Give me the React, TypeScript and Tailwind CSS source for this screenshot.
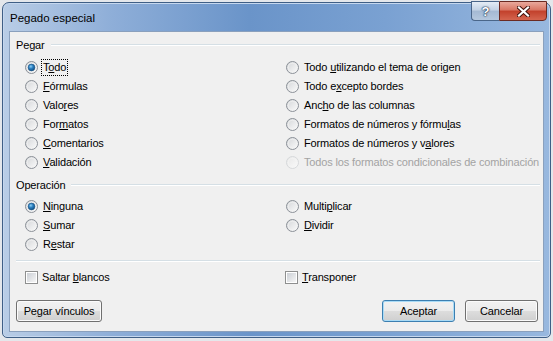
import React from "react";

function Radio({ checked = false, disabled = false, id }: { checked?: boolean; disabled?: boolean; id: string }) {
    return (
        <svg width="13" height="13" viewBox="0 0 13 13" className="shrink-0">
            <defs>
                <linearGradient id={`rb-${id}`} x1="0" y1="0" x2="1" y2="1">
                    <stop offset="0" stopColor={disabled ? "#e6e6e6" : "#d2d4d7"} />
                    <stop offset="1" stopColor={disabled ? "#fbfbfb" : "#fdfdfd"} />
                </linearGradient>
                <radialGradient id={`rd-${id}`} cx="0.4" cy="0.35" r="0.7">
                    <stop offset="0" stopColor="#8fd0f5" />
                    <stop offset="0.45" stopColor="#2b7fc0" />
                    <stop offset="1" stopColor="#0d4a7e" />
                </radialGradient>
            </defs>
            <circle cx="6.5" cy="6.5" r="6" fill={`url(#rb-${id})`} stroke={disabled ? "#d6d8da" : "#8b9097"} strokeWidth="1" />
            <circle cx="6.5" cy="6.5" r="4.3" fill="none" stroke={disabled ? "#f4f4f4" : "#f1f1f1"} strokeWidth="0.8" />
            {checked && <circle cx="6.5" cy="6.5" r="3.4" fill={`url(#rd-${id})`} stroke="#1c5381" strokeWidth="0.6" />}
        </svg>
    );
}

function Check() {
    return (
        <div className="w-[13px] h-[13px] shrink-0 border border-[#8e8f8f] bg-white p-[1px]">
            <div className="w-full h-full bg-gradient-to-br from-[#cbcfd5] to-[#f6f6f6]" />
        </div>
    );
}

function Option({ label, checked, disabled, id, focus }: { label: React.ReactNode; checked?: boolean; disabled?: boolean; id: string; focus?: boolean }) {
    return (
        <div className={`h-[19px] flex items-center gap-[3px] ${disabled ? "text-[#a3a3a3]" : "text-black"}`}>
            <Radio checked={checked} disabled={disabled} id={id} />
            <span className={`px-[1px] leading-[15px] border whitespace-nowrap ${focus ? "border-dotted border-black" : "border-transparent"}`}>{label}</span>
        </div>
    );
}

function GroupHeader({ title }: { title: string }) {
    return (
        <div className="h-[16px] flex items-center gap-[6px]">
            <span>{title}</span>
            <div className="flex-1 h-[2px] border-t border-[#d5dfe5] border-b border-b-white" />
        </div>
    );
}

function Button({ children, primary }: { children: React.ReactNode; primary?: boolean }) {
    return (
        <div
            className={`h-[22px] w-[73px] flex items-center justify-center rounded-[3px] border ${
                primary ? "border-[#3c7fb1] shadow-[inset_0_0_0_1px_#a9dbf6]" : "border-[#707070] shadow-[inset_0_0_0_1px_#fbfbfb]"
            } bg-[linear-gradient(#f2f2f2_0%,#ebebeb_49%,#dddddd_50%,#cfcfcf_100%)]`}
        >
            {children}
        </div>
    );
}

export default function App() {
    return (
        <div className="w-[553px] h-[341px] bg-[#e4e7eb] pt-[2px] pl-[2px] font-['Liberation_Sans',Arial,sans-serif] text-[11px] tracking-[-0.15px] text-black">
            <div className="w-[549px] h-[336px] rounded-t-[7px] rounded-b-[5px] border border-[#3f5f86] bg-[linear-gradient(90deg,#b9cde6_0%,#8eaed8_20%,#6a94c9_45%,#7aa1d2_70%,#98b8df_100%)] shadow-[inset_0_0_0_1px_#c5d7ee] flex flex-col px-[6px] pb-[5px]">
                <div className="h-[28px] flex items-start justify-between">
                    <div className="pt-[7px] pl-[1px] leading-[16px] text-[11.5px] tracking-normal text-black">Pegado especial</div>
                    <div className="flex -mt-[2px] -mr-[3px]">
                        <div className="w-[28px] h-[20px] rounded-bl-[4px] border border-[#4a6689] border-r-0 bg-[linear-gradient(#e4ecf5_0%,#c3d2e4_45%,#a4b9d3_50%,#b5c8de_100%)] flex items-center justify-center">
                            <span className="font-bold text-[13px] leading-none text-white [text-shadow:0_0_1px_#1d3554,0_0_1px_#1d3554,0_0_2px_#1d3554]">?</span>
                        </div>
                        <div className="w-[48px] h-[20px] rounded-br-[4px] border border-[#6b2a22] bg-[linear-gradient(#e9a99c_0%,#d87563_45%,#c2402b_50%,#d4654f_100%)] flex items-center justify-center">
                            <svg width="13" height="11" viewBox="0 0 13 11">
                                <path d="M2 1.5 L6.5 5.5 L11 1.5 M2 9.5 L6.5 5.5 L11 9.5" stroke="#3a0e08" strokeWidth="4" fill="none" strokeLinecap="square" />
                                <path d="M2 1.5 L6.5 5.5 L11 1.5 M2 9.5 L6.5 5.5 L11 9.5" stroke="#ffffff" strokeWidth="2.2" fill="none" strokeLinecap="square" />
                            </svg>
                        </div>
                    </div>
                </div>
                <div className="flex-1 border border-[#8aa0bd] bg-[#f0f0f0] pt-[5px] pl-[6px] pr-[3px] flex flex-col">
                    <GroupHeader title="Pegar" />
                    <div className="mt-[5px] pl-[9px] grid grid-cols-[261px_1fr]">
                        <div className="flex flex-col">
                            <Option id="a1" checked focus label={<>T<u>o</u>do</>} />
                            <Option id="a2" label={<><u>F</u>órmulas</>} />
                            <Option id="a3" label={<>Valo<u>r</u>es</>} />
                            <Option id="a4" label={<>For<u>m</u>atos</>} />
                            <Option id="a5" label={<><u>C</u>omentarios</>} />
                            <Option id="a6" label={<><u>V</u>alidación</>} />
                        </div>
                        <div className="flex flex-col">
                            <Option id="b1" label={<>Todo <u>u</u>tilizando el tema de origen</>} />
                            <Option id="b2" label={<>Todo e<u>x</u>cepto bordes</>} />
                            <Option id="b3" label={<>Anc<u>h</u>o de las columnas</>} />
                            <Option id="b4" label={<>Formatos de números y fórmu<u>l</u>as</>} />
                            <Option id="b5" label={<>Formatos de números y v<u>a</u>lores</>} />
                            <Option id="b6" disabled label="Todos los formatos condicionales de combinación" />
                        </div>
                    </div>
                    <div className="mt-[5px]">
                        <GroupHeader title="Operación" />
                    </div>
                    <div className="mt-[4px] pl-[9px] grid grid-cols-[261px_1fr]">
                        <div className="flex flex-col">
                            <Option id="c1" checked label={<><u>N</u>inguna</>} />
                            <Option id="c2" label={<><u>S</u>umar</>} />
                            <Option id="c3" label={<>R<u>e</u>star</>} />
                        </div>
                        <div className="flex flex-col">
                            <Option id="d1" label={<>Multi<u>p</u>licar</>} />
                            <Option id="d2" label={<><u>D</u>ividir</>} />
                        </div>
                    </div>
                    <div className="mt-[6px] h-[2px] border-t border-[#d5dfe5] border-b border-b-white" />
                    <div className="mt-[6px] pl-[9px] grid grid-cols-[261px_1fr]">
                        <div className="h-[19px] flex items-center gap-[4px]">
                            <Check />
                            <span>Saltar <u>b</u>lancos</span>
                        </div>
                        <div className="h-[19px] flex items-center gap-[4px] -ml-[1px]">
                            <Check />
                            <span><u>T</u>ransponer</span>
                        </div>
                    </div>
                    <div className="mt-[13px] flex items-center">
                        <div className="h-[22px] w-[86px] flex items-center justify-center rounded-[3px] border border-[#707070] shadow-[inset_0_0_0_1px_#fbfbfb] bg-[linear-gradient(#f2f2f2_0%,#ebebeb_49%,#dddddd_50%,#cfcfcf_100%)]">
                            <span>Pe<u>g</u>ar vínculos</span>
                        </div>
                        <div className="flex-1" />
                        <Button primary>Aceptar</Button>
                        <div className="w-[10px]" />
                        <Button>Cancelar</Button>
                        <div className="w-[2px]" />
                    </div>
                </div>
            </div>
        </div>
    );
}
